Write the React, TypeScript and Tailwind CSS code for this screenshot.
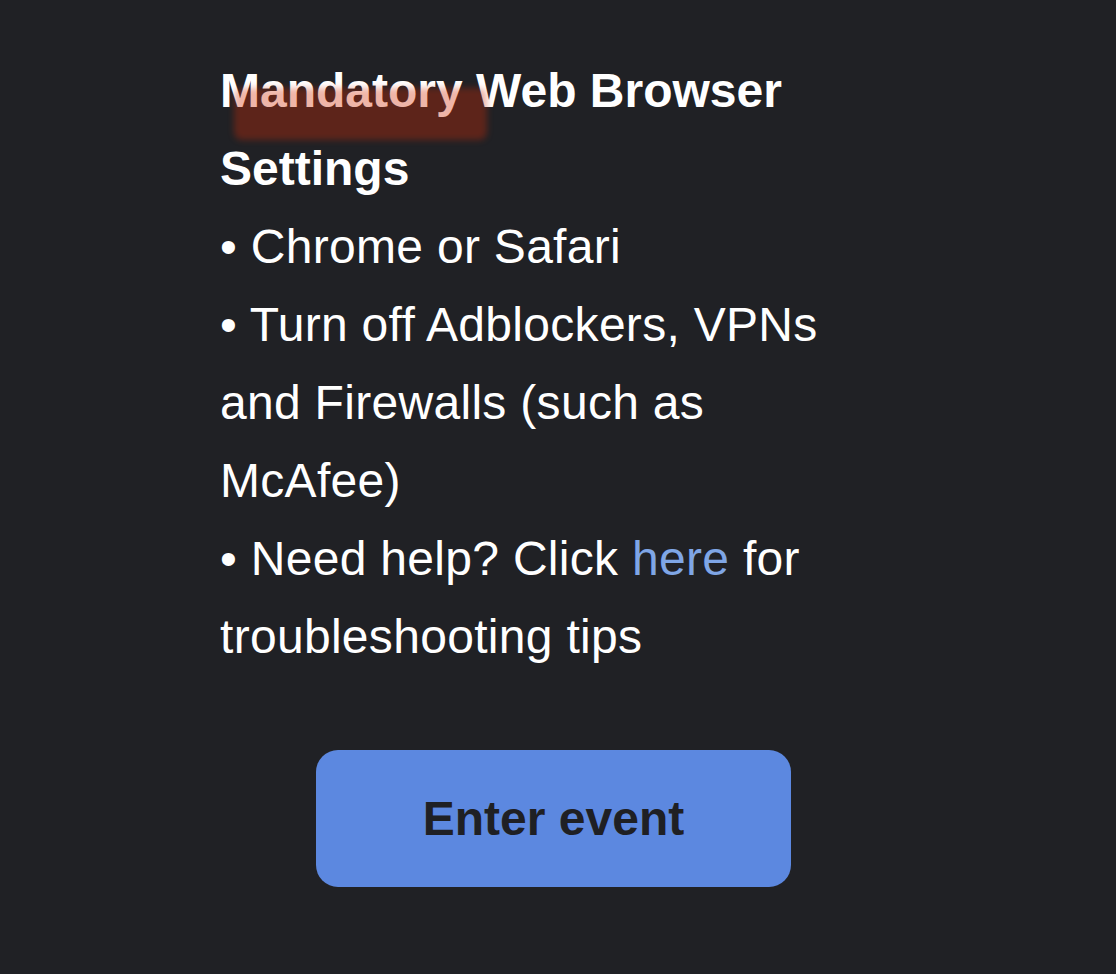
const App = () => {
  return (
    <div className="min-h-[974px] w-full bg-[#202125] text-white" style={{ fontFamily: '"Liberation Sans", Arial, sans-serif' }}>
      <div className="ml-[220px] w-[667px] pt-[52px]">
        <div className="w-[640px] text-[48px] leading-[78px]">
          <p className="relative font-bold">
            Mandatory Web Browser Settings
            <span className="pointer-events-none absolute left-[14px] top-[36px] h-[52px] w-[253px] rounded-[8px] bg-[#d22a06]/35 blur-[3px]" />
          </p>
          <div className="tracking-[0.3px]">
            <p>• Chrome or Safari</p>
            <p>• Turn off Adblockers, VPNs and Firewalls (such as McAfee)</p>
            <p>
              • Need help? Click <a className="text-[#7fa6e6]">here</a> for troubleshooting tips
            </p>
          </div>
        </div>
        <div className="mt-[74px] flex justify-center">
          <button className="h-[137px] w-[475px] rounded-[22px] bg-[#5c88e0] text-[48px] font-bold text-[#1f2024]">
            Enter event
          </button>
        </div>
      </div>
    </div>
  );
};

export default App;
